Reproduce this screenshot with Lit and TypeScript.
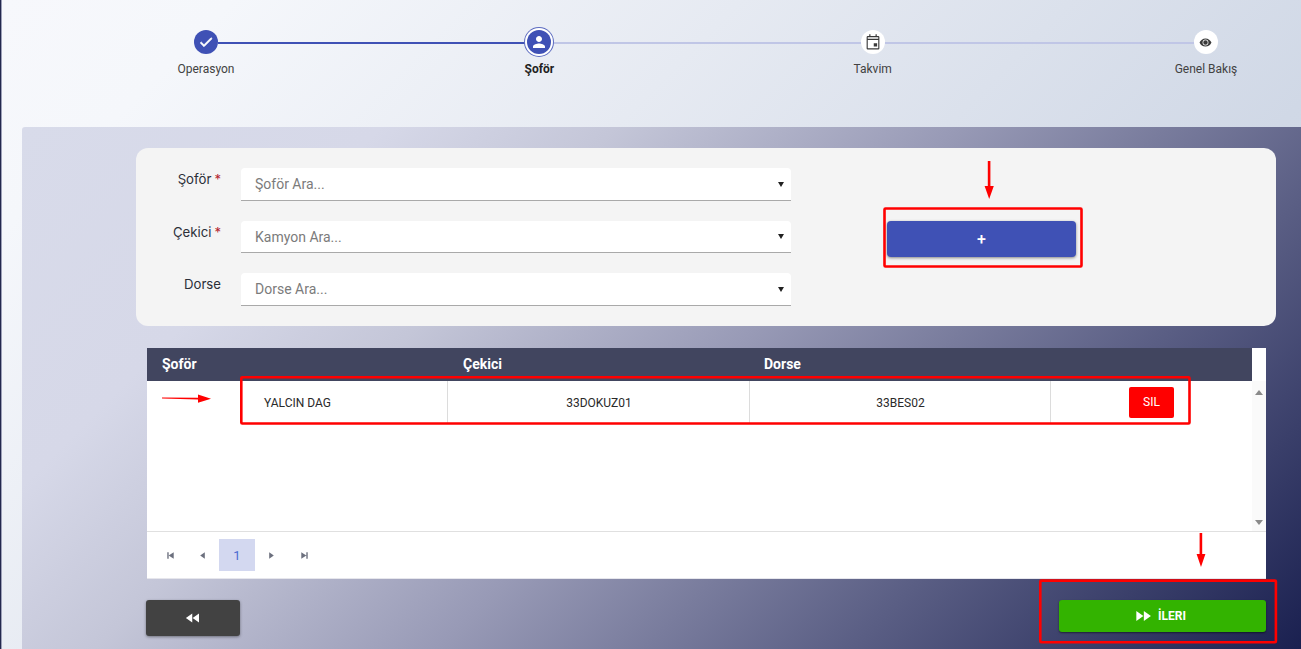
import { LitElement, html, css, svg } from "lit";
import { customElement } from "lit/decorators.js";

const ICONS = {
  check: "M9 16.17L4.83 12l-1.42 1.41L9 19 21 7l-1.41-1.41z",
  person: "M12 12c2.21 0 4-1.79 4-4s-1.79-4-4-4-4 1.79-4 4 1.79 4 4 4zm0 2c-2.67 0-8 1.34-8 4v2h16v-2c0-2.66-5.33-4-8-4z",
  event: "M7 1.5h1.6V4h6.8V1.5H17V4h2a1.5 1.5 0 0 1 1.5 1.5v15A1.5 1.5 0 0 1 19 22H5a1.5 1.5 0 0 1-1.5-1.5v-15A1.5 1.5 0 0 1 5 4h2zM5 5.6v2.2h14V5.6zM5 9.4v11h14v-11zM13 13.5h4.5V18H13z",
  eye: "M12 4.5C7 4.5 2.73 7.61 1 12c1.73 4.39 6 7.5 11 7.5s9.27-3.11 11-7.5c-1.73-4.39-6-7.5-11-7.5zM12 6.6a5.4 5.4 0 1 1 0 10.8a5.4 5.4 0 1 1 0-10.8zM12 7.8a4.2 4.2 0 1 0 0 8.4a4.2 4.2 0 1 0 0-8.4z",
  ff: "M4 18l8.5-6L4 6v12zm9-12v12l8.5-6L13 6z",
  rw: "M11 18V6l-8.5 6 8.5 6zm.5-6l8.5 6V6l-8.5 6z",
  first: "M2.5 2.5h1.5v7H2.5zM9.5 2.5v7L4 6z",
  prev: "M8.5 2.5v7L3.5 6z",
  next: "M3.5 2.5v7L8.5 6z",
  last: "M8 2.5h1.5v7H8zM2.5 2.5v7L8 6z",
};

const icon = (d: string, size: number, vb = 24) =>
  html`<svg width=${size} height=${size} viewBox="0 0 ${vb} ${vb}" fill="currentColor" fill-rule="evenodd"><path d=${d}></path></svg>`;

const annotations = svg`
  <g fill="none" stroke="#f00" stroke-width="2.6">
    <rect x="884.5" y="208.5" width="197" height="58" rx="1"></rect>
    <rect x="241.3" y="377.3" width="948.2" height="46.2" rx="1"></rect>
    <rect x="1040.3" y="580.6" width="235.6" height="61.6" rx="1"></rect>
  </g>
  <g fill="#f00">
    <path d="M987.8 161h2.6v25h3.4L989.2 199l-4.6-13h3.2z"></path>
    <path d="M162 397.4l36 .3v-3.2l13 4.3-13 3.9v-3.2l-36-.9z"></path>
    <path d="M1199.6 533h2.6v21h3.2l-4.4 13-4.4-13h3z"></path>
  </g>
`;

@customElement("app-root")
export class AppRoot extends LitElement {
  static styles = css`
    :host {
      display: block;
      position: relative;
      width: 1301px;
      height: 649px;
      overflow: hidden;
      font-family: Roboto, "Liberation Sans", sans-serif;
      background: linear-gradient(135deg, #f7f8fc 0%, #f5f7fb 12%, #e6eaf2 38%, #d0d8e6 72%, #c8d0e0 100%);
      box-shadow: inset 1px 0 0 #23284e, inset 2px 0 0 #9da0b8;
    }
    .page { display: flex; flex-direction: column; height: 649px; }

    .stepper {
      height: 127px;
      flex: none;
      box-sizing: border-box;
      padding: 27px 35px 0 146px;
      display: grid;
      grid-template-columns: 120px 1fr 120px 1fr 120px 1fr 120px;
    }
    .step { display: flex; flex-direction: column; align-items: center; position: relative; z-index: 1; }
    .dot-wrap { height: 30px; display: flex; align-items: center; justify-content: center; }
    .dot {
      width: 24px; height: 24px; border-radius: 50%;
      display: flex; align-items: center; justify-content: center;
      background: #fff; color: #3a3a3a;
    }
    .dot.done, .dot.active { background: #3f51b5; color: #fff; }
    .dot.done svg { stroke: #fff; stroke-width: 1.2; }
    .dot.active { box-shadow: 0 0 0 2px #fff, 0 0 0 3px #5c6bc0; }
    .step-label { margin-top: 5px; font-size: 12px; line-height: 14px; color: #424242; white-space: nowrap; }
    .step-label.active { font-weight: 700; color: #212121; }
    .conn { height: 2px; margin: 15px -48px 0; background: #c0c6e6; }
    .conn.done { background: #3f51b5; }

    .panel {
      flex: 1;
      margin-left: 22px;
      box-sizing: border-box;
      padding: 21px 25px 0 114px;
      border-radius: 3px 0 0 0;
      background: linear-gradient(135deg, #d8dbea 0%, #d6d8e8 20%, #c4c6d8 33%, #989ab6 52%, #5a5e84 75%, #1a2050 100%);
    }

    .card {
      height: 178px;
      box-sizing: border-box;
      padding: 20px 0 0;
      background: #f4f4f4;
      border-radius: 12px;
      display: flex;
      align-items: flex-start;
    }
    .form {
      display: grid;
      grid-template-columns: 85px 550px;
      column-gap: 20px;
      row-gap: 20px;
      grid-auto-rows: 32.5px;
    }
    .lbl {
      text-align: right;
      font-family: Inter, "Open Sans", sans-serif;
      font-size: 13.2px;
      line-height: 22px;
      color: #2b2f38;
    }
    .req { color: #b3202a; margin-left: 3px; }
    .select {
      background: #fff;
      border-bottom: 1px solid #a9a9a9;
      border-radius: 4px 4px 0 0;
      box-sizing: border-box;
      display: flex;
      align-items: center;
      justify-content: space-between;
      padding: 1px 7px 0 14px;
      font-size: 14px;
      color: #7b7b7b;
    }
    .caret { width: 0; height: 0; border: 3.5px solid transparent; border-top: 5.5px solid #212121; border-bottom: 0; }
    .add {
      margin: 53px 0 0 96px;
      width: 189px;
      height: 36px;
      border: 0;
      border-radius: 4px;
      background: #3f51b5;
      color: #fff;
      font: 500 16px/38px Roboto, sans-serif;
      box-shadow: 0 1px 3px rgba(0,0,0,.45);
      padding: 0;
    }

    .table {
      margin: 22px 10px 0 11px;
      height: 231px;
      background: #fff;
      display: flex;
      flex-direction: column;
      border-bottom: 1px solid #e6e6ec;
      box-sizing: border-box;
    }
    .head-row { display: flex; height: 33px; flex: none; }
    .head {
      width: 1105px;
      background: #41455f;
      color: #fff;
      display: grid;
      grid-template-columns: 301px 301px 1fr;
      align-items: center;
      font-size: 14px;
      font-weight: 700;
      line-height: 32px;
    }
    .head span { padding-left: 15px; padding-bottom: 1px; }
    .body { flex: 1; display: flex; border-bottom: 1px solid #e0e0e0; min-height: 0; }
    .rows { width: 1105px; }
    .row {
      display: grid;
      grid-template-columns: 300px 302px 301px 1fr;
      height: 43px;
      font-size: 12px;
      color: #2a2a2a;
    }
    .cell {
      display: flex;
      align-items: center;
      justify-content: center;
      border-left: 1px solid #dcdcdc;
      padding: 1px 0 0 1px;
    }
    .cell:first-child { border-left: 0; }
    .cell:last-child { padding-left: 0; }
    .del {
      width: 45px; height: 31px;
      border: 0; border-radius: 2px;
      background: #f00;
      color: #fff;
      font: 400 12px Roboto, sans-serif;
      padding: 0;
      margin-top: -2px;
    }
    .scroll {
      width: 14px;
      background: #fafafa;
      display: flex;
      flex-direction: column;
      justify-content: space-between;
      align-items: center;
      padding: 9px 0 6px;
      box-sizing: border-box;
    }
    .up { width: 0; height: 0; border: 4.5px solid transparent; border-bottom: 5px solid #8a8a8a; border-top: 0; }
    .down { width: 0; height: 0; border: 4.5px solid transparent; border-top: 5px solid #8a8a8a; border-bottom: 0; }

    .pager { height: 46px; flex: none; display: flex; align-items: center; padding-left: 7px; color: #6c707e; }
    .pg { width: 33px; height: 32px; display: flex; align-items: center; justify-content: center; }
    .pg.first { width: 32px; }
    .pg.current {
      width: 36px;
      background: #d3d8f0;
      color: #4a6bd0;
      font-size: 13px;
    }

    .actions {
      margin: 21px 10px 0 10px;
      display: flex;
      align-items: flex-start;
      justify-content: space-between;
    }
    .back {
      width: 94px; height: 36px;
      border: 0; border-radius: 3px;
      background: #424242;
      color: #fff;
      display: flex; align-items: center; justify-content: center;
      box-shadow: 0 1px 3px rgba(0,0,0,.4);
      padding: 0;
    }
    .next {
      width: 207px; height: 32px;
      border: 0; border-radius: 3px;
      background: #33b300;
      color: #fff;
      display: flex; align-items: center; justify-content: center;
      gap: 5px;
      font: 700 12px Roboto, sans-serif;
      box-shadow: 0 1px 2px rgba(0,0,0,.5);
      padding: 0 6px 0 0;
    }
    .overlay { position: absolute; left: 0; top: 0; pointer-events: none; }
  `;

  private stepEl(label: string, iconPath: string, state: string, size: number) {
    return html`<div class="step">
      <div class="dot-wrap"><div class="dot ${state}">${icon(iconPath, size)}</div></div>
      <div class="step-label ${state === "active" ? "active" : ""}">${label}</div>
    </div>`;
  }

  private field(label: string, req: boolean, placeholder: string) {
    return html`<div class="lbl">${label}${req ? html`<span class="req">*</span>` : ""}</div>
      <div class="select"><span>${placeholder}</span><span class="caret"></span></div>`;
  }

  render() {
    return html`<div class="page">
        <div class="stepper">
          ${this.stepEl("Operasyon", ICONS.check, "done", 16)}
          <div class="conn done"></div>
          ${this.stepEl("Şoför", ICONS.person, "active", 18)}
          <div class="conn"></div>
          ${this.stepEl("Takvim", ICONS.event, "", 18)}
          <div class="conn"></div>
          ${this.stepEl("Genel Bakış", ICONS.eye, "", 13)}
        </div>
        <div class="panel">
          <div class="card">
            <div class="form">
              ${this.field("Şoför", true, "Şoför Ara...")}
              ${this.field("Çekici", true, "Kamyon Ara...")}
              ${this.field("Dorse", false, "Dorse Ara...")}
            </div>
            <button class="add">+</button>
          </div>
          <div class="table">
            <div class="head-row">
              <div class="head"><span>Şoför</span><span>Çekici</span><span>Dorse</span></div>
            </div>
            <div class="body">
              <div class="rows">
                <div class="row">
                  <div class="cell">YALCIN DAG</div>
                  <div class="cell">33DOKUZ01</div>
                  <div class="cell">33BES02</div>
                  <div class="cell"><button class="del">SIL</button></div>
                </div>
              </div>
              <div class="scroll"><span class="up"></span><span class="down"></span></div>
            </div>
            <div class="pager">
              <div class="pg first">${icon(ICONS.first, 11, 12)}</div>
              <div class="pg">${icon(ICONS.prev, 11, 12)}</div>
              <div class="pg current">1</div>
              <div class="pg">${icon(ICONS.next, 11, 12)}</div>
              <div class="pg">${icon(ICONS.last, 11, 12)}</div>
            </div>
          </div>
          <div class="actions">
            <button class="back">${icon(ICONS.rw, 18)}</button>
            <button class="next">${icon(ICONS.ff, 20)}<span>İLERI</span></button>
          </div>
        </div>
      </div>
      <svg class="overlay" width="1301" height="649" viewBox="0 0 1301 649">${annotations}</svg>`;
  }
}
